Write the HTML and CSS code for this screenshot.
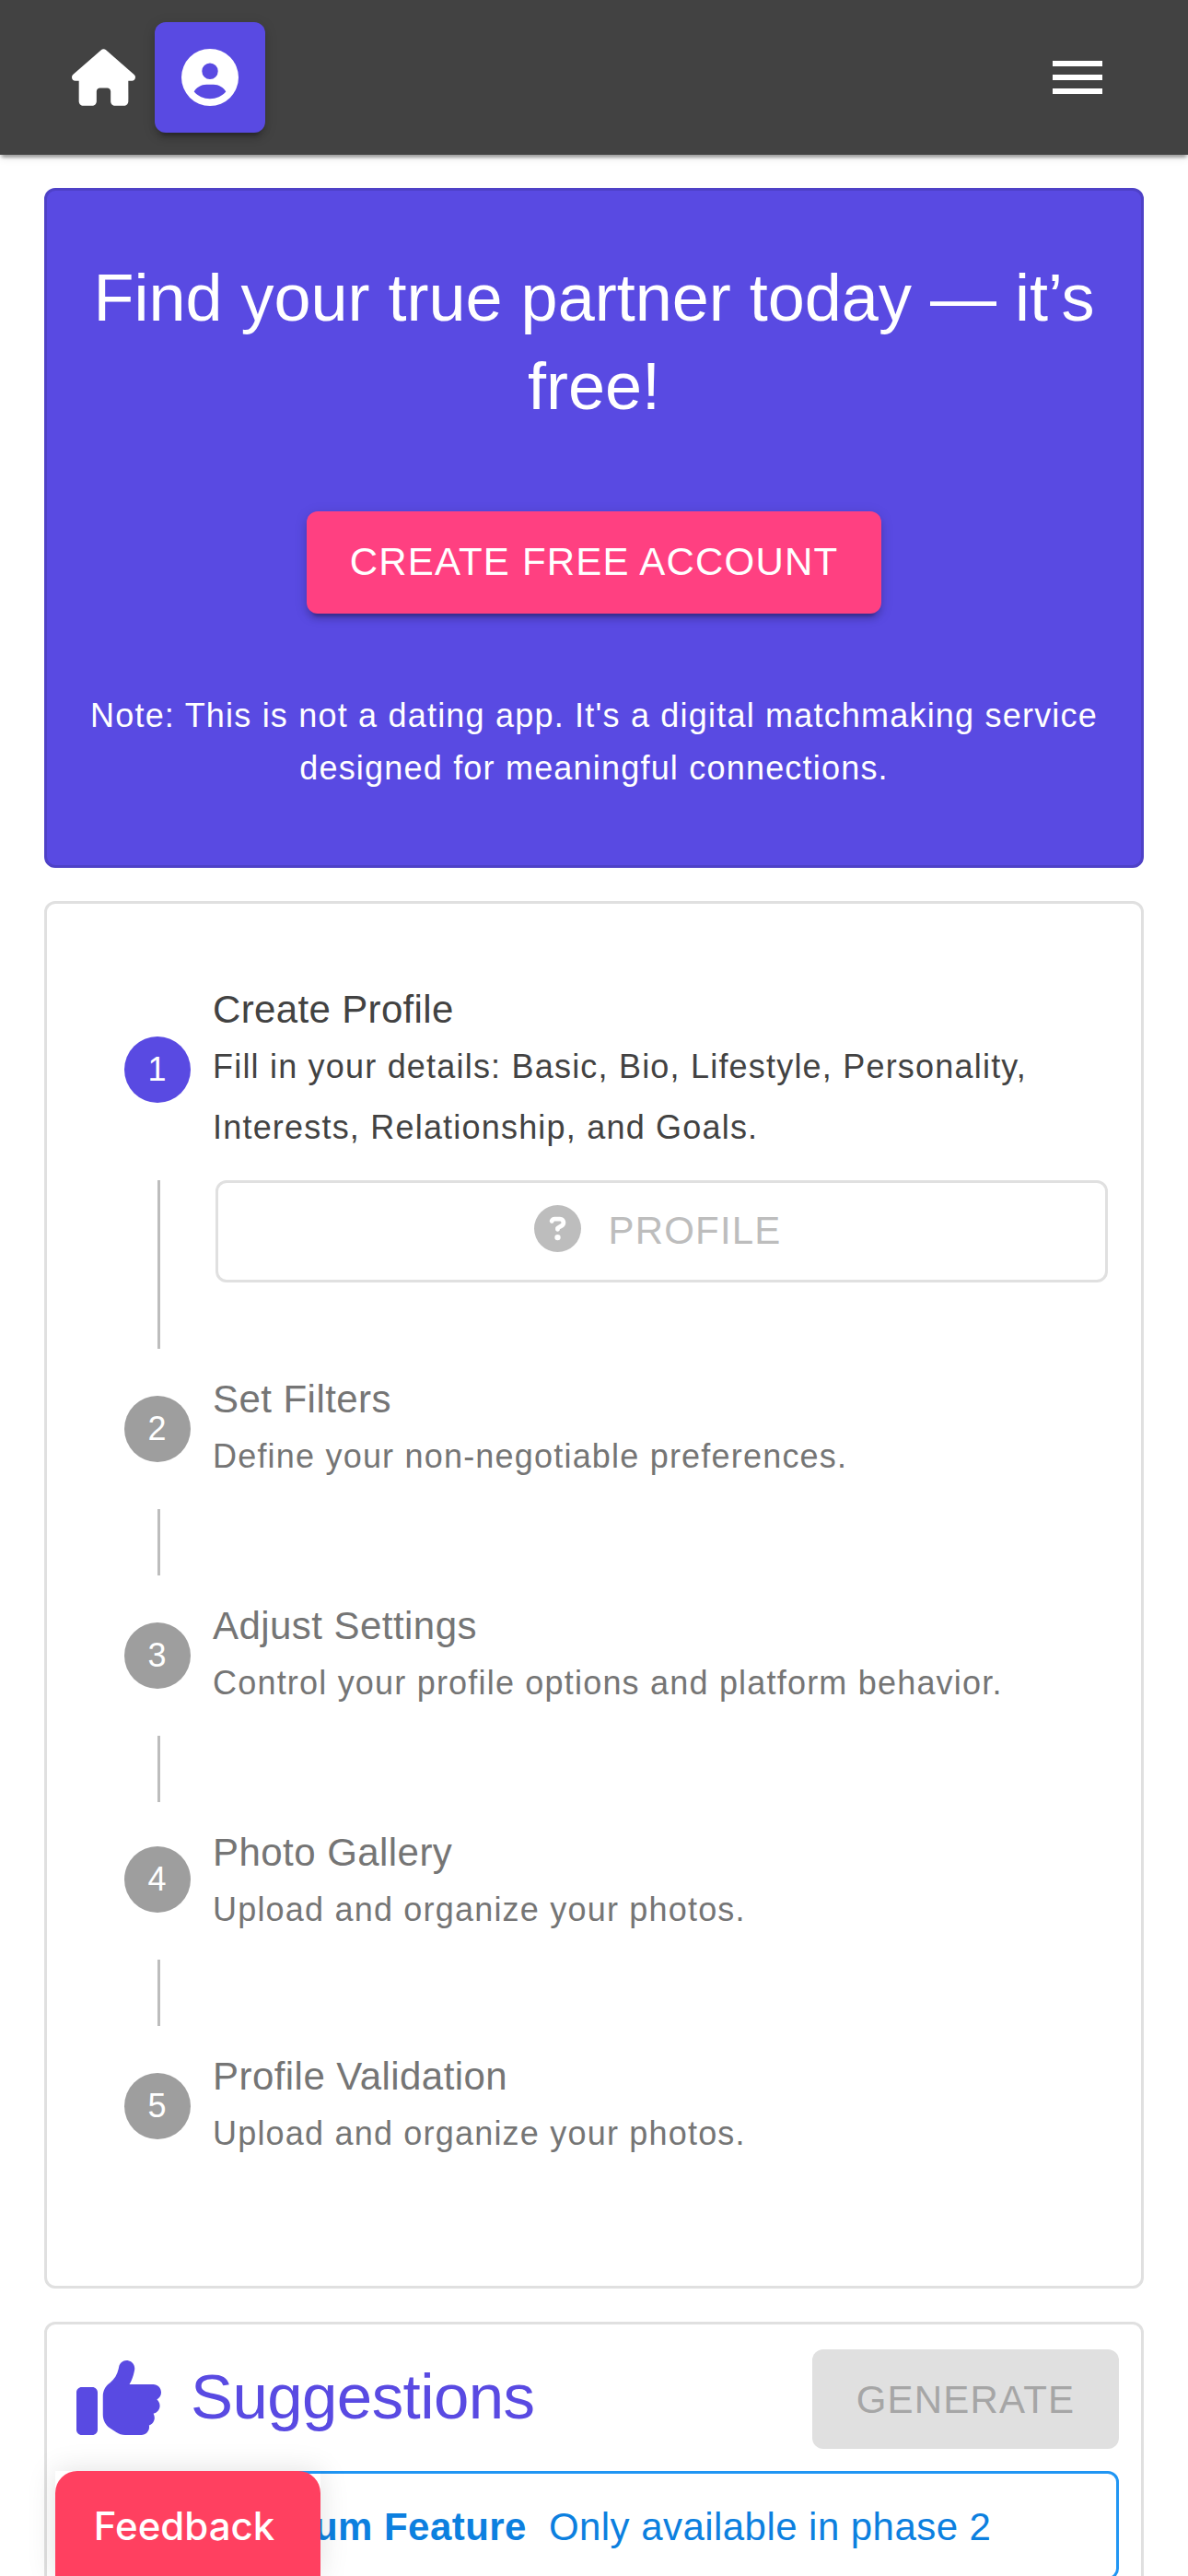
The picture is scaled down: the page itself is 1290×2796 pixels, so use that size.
FILE: index.html
```html
<!DOCTYPE html>
<html lang="en">
<head>
<meta charset="utf-8">
<title>Matchmaking</title>
<link rel="stylesheet" href="styles.css">
</head>
<body>
<header class="appbar">
  <nav class="appbar-nav">
    <a class="home-link" href="#" aria-label="Home">
      <svg class="icon-home" viewBox="0 0 576 512"><path d="M575.8 255.5c0 18-15 32.1-32 32.1h-32l.7 160.2c0 2.7-.2 5.4-.5 8.1V472c0 22.1-17.9 40-40 40H456c-1.1 0-2.2 0-3.3-.1c-1.4 .1-2.8 .1-4.2 .1H416 392c-22.1 0-40-17.9-40-40V448 384c0-17.7-14.3-32-32-32H256c-17.7 0-32 14.3-32 32v64 24c0 22.1-17.9 40-40 40H160 128.1c-1.5 0-3-.1-4.5-.2c-1.2 .1-2.4 .2-3.6 .2H104c-22.1 0-40-17.9-40-40V360c0-.9 0-1.9 .1-2.8V287.6H32c-18 0-32-14-32-32.1c0-9 3-17 10-24L266.4 8c7-7 15-8 22-8s15 2 21 7L564.8 231.5c8 7 12 15 11 24z"/></svg>
    </a>
    <a class="account-link" href="#" aria-label="Account">
      <svg class="icon-user" viewBox="0 0 512 512"><path d="M399 384.2C376.9 345.8 335.4 320 288 320H224c-47.4 0-88.9 25.8-111 64.2c35.2 39.2 86.2 63.8 143 63.8s107.8-24.7 143-63.8zM0 256a256 256 0 1 1 512 0A256 256 0 1 1 0 256zm256 16a72 72 0 1 0 0-144 72 72 0 1 0 0 144z"/></svg>
    </a>
  </nav>
  <button class="menu-button" aria-label="Menu"><span class="menu-bar"></span><span class="menu-bar"></span><span class="menu-bar"></span></button>
</header>

<main class="content">
  <section class="card hero">
    <h1 class="hero-title">Find your true partner today — it’s free!</h1>
    <button class="button button-secondary">CREATE FREE ACCOUNT</button>
    <p class="hero-note">Note: This is not a dating app. It's a digital matchmaking service designed for meaningful connections.</p>
  </section>

  <section class="card steps">
    <div class="step step-active">
      <span class="step-number">1</span>
      <div class="step-text"><div class="step-title">Create Profile</div><div class="step-detail">Fill in your details: Basic, Bio, Lifestyle, Personality, Interests, Relationship, and Goals.</div></div>
    </div>
    <div class="connector connector-open">
      <button class="button button-outlined" disabled>
        <svg class="icon-question" viewBox="0 0 512 512"><path d="M256 512A256 256 0 1 0 256 0a256 256 0 1 0 0 512zM169.8 165.3c7.9-22.3 29.1-37.3 52.8-37.3h58.3c34.9 0 63.1 28.3 63.1 63.1c0 22.6-12.1 43.5-31.7 54.8L280 264.4c-.2 13-10.9 23.6-24 23.6c-13.3 0-24-10.7-24-24V250.5c0-8.6 4.6-16.5 12.1-20.8l44.3-25.4c4.7-2.7 7.6-7.7 7.6-13.1c0-8.4-6.8-15.1-15.1-15.1H222.6c-3.4 0-6.4 2.1-7.5 5.3l-.4 1.2c-4.4 12.5-18.2 19-30.6 14.6s-19-18.2-14.6-30.6l.4-1.2zM224 352a32 32 0 1 1 64 0 32 32 0 1 1 -64 0z"/></svg>
        <span>PROFILE</span>
      </button>
    </div>
    <div class="step">
      <span class="step-number">2</span>
      <div class="step-text"><div class="step-title">Set Filters</div><div class="step-detail">Define your non-negotiable preferences.</div></div>
    </div>
    <div class="connector"></div>
    <div class="step">
      <span class="step-number">3</span>
      <div class="step-text"><div class="step-title">Adjust Settings</div><div class="step-detail">Control your profile options and platform behavior.</div></div>
    </div>
    <div class="connector"></div>
    <div class="step step-compact">
      <span class="step-number">4</span>
      <div class="step-text"><div class="step-title">Photo Gallery</div><div class="step-detail">Upload and organize your photos.</div></div>
    </div>
    <div class="connector"></div>
    <div class="step">
      <span class="step-number">5</span>
      <div class="step-text"><div class="step-title">Profile Validation</div><div class="step-detail">Upload and organize your photos.</div></div>
    </div>
  </section>

  <section class="card suggestions">
    <div class="suggestions-head">
      <svg class="icon-thumb" viewBox="0 32 512 448" preserveAspectRatio="none"><path d="M313.4 32.9c26 5.2 42.9 30.5 37.7 56.5l-2.3 11.4c-5.3 26.7-15.1 52.1-28.8 75.2H464c26.5 0 48 21.5 48 48c0 18.5-10.5 34.6-25.9 42.6C497 275.4 504 288.9 504 304c0 23.4-16.8 42.9-38.9 47.1c4.4 7.3 6.9 15.8 6.9 24.9c0 21.3-13.9 39.4-33.1 45.6c.7 3.3 1.1 6.8 1.1 10.4c0 26.5-21.5 48-48 48H294.5c-19 0-37.5-5.6-53.3-16.1l-38.5-25.7C176 420.4 160 390.4 160 358.3V320 272 247.1c0-29.2 13.3-56.7 36-75l7.4-5.9c26.5-21.2 44.6-51 51.2-84.2l2.3-11.4c5.2-26 30.5-42.9 56.5-37.7zM32 192H96c17.7 0 32 14.3 32 32V448c0 17.7-14.3 32-32 32H32c-17.7 0-32-14.3-32-32V224c0-17.7 14.3-32 32-32z"/></svg>
      <h2 class="suggestions-title">Suggestions</h2>
      <button class="button button-disabled" disabled>GENERATE</button>
    </div>
    <div class="alert"><strong>Premium Feature</strong><span>Only available in phase 2</span></div>
  </section>
</main>

<div class="feedback"><button class="feedback-button">Feedback</button></div>
</body>
</html>
```
FILE: styles.css
```css
* {
  box-sizing: border-box;
}

html,
body {
  height: 2796px;
  overflow: hidden;
}

body {
  margin: 0;
  background: #fff;
  color: #424242;
  font-family: "Liberation Sans", Arial, sans-serif;
}

h1,
h2,
p {
  margin: 0;
  font-weight: 400;
}

button {
  border: 0;
  font-family: inherit;
}

svg {
  display: block;
  flex: none;
  fill: currentColor;
}

/* App bar */
.appbar {
  display: flex;
  align-items: center;
  justify-content: space-between;
  height: 168px;
  padding: 0 93px 0 78px;
  background: #424242;
  color: #fff;
  box-shadow: 0 6px 3px -3px rgba(0, 0, 0, .2), 0 3px 3px rgba(0, 0, 0, .14), 0 3px 9px rgba(0, 0, 0, .12);
}

.appbar-nav {
  display: flex;
  align-items: center;
  gap: 21px;
}

.home-link,
.account-link {
  color: inherit;
}

.icon-home {
  width: 69px;
  height: 62px;
}

.account-link {
  display: flex;
  align-items: center;
  justify-content: center;
  width: 120px;
  height: 120px;
  border-radius: 12px;
  background: #594ae2;
  box-shadow: 0 9px 3px -6px rgba(0, 0, 0, .2), 0 6px 6px rgba(0, 0, 0, .14), 0 3px 15px rgba(0, 0, 0, .12);
}

.icon-user {
  width: 62px;
  height: 62px;
}

.menu-button {
  display: flex;
  flex-direction: column;
  gap: 9px;
  width: 54px;
  padding: 0;
  background: none;
}

.menu-bar {
  height: 6px;
  background: #fff;
}

/* Page */
.content {
  display: flex;
  flex-direction: column;
  gap: 36px;
  padding: 36px 48px 0;
}

.card {
  flex: none;
  border: 3px solid #e0e0e0;
  border-radius: 12px;
}

.button {
  display: flex;
  align-items: center;
  justify-content: center;
  padding: 0 0 1px;
  border-radius: 12px;
  font-size: 42px;
  line-height: 72px;
  letter-spacing: 1.2px;
}

/* Hero */
.hero {
  display: flex;
  flex-direction: column;
  align-items: center;
  height: 738px;
  padding: 68px 36px 0;
  border-color: #4e41c7;
  background: #594ae2;
  color: #fff;
  text-align: center;
}

.hero-title {
  font-size: 72px;
  line-height: 96px;
}

.button-secondary {
  width: 624px;
  height: 111px;
  margin-top: 88px;
  background: #ff4081;
  color: #fff;
  box-shadow: 0 9px 3px -6px rgba(0, 0, 0, .2), 0 6px 6px rgba(0, 0, 0, .14), 0 3px 15px rgba(0, 0, 0, .12);
}

.hero-note {
  margin-top: 82px;
  font-size: 36px;
  line-height: 57px;
  letter-spacing: 1.2px;
}

/* Steps */
.steps {
  height: 1506px;
  padding: 60px 36px 0 84px;
}

.step {
  display: flex;
  align-items: center;
  gap: 24px;
  height: 174px;
  color: #757575;
}

.step-number {
  flex: none;
  width: 72px;
  height: 72px;
  border-radius: 50%;
  background: #9e9e9e;
  color: #fff;
  font-size: 36px;
  line-height: 72px;
  letter-spacing: 1.2px;
  text-align: center;
}

.step-text {
  align-self: flex-start;
  padding-top: 25px;
}

.step-title {
  height: 59px;
  font-size: 42px;
  line-height: 60px;
  letter-spacing: .45px;
}

.step-detail {
  font-size: 36px;
  line-height: 66px;
  letter-spacing: 1.2px;
}

.step-active {
  height: 240px;
  color: #424242;
}

.step-active .step-number {
  background: #594ae2;
}

.step-active .step-title {
  letter-spacing: .35px;
}

.step-compact {
  height: 171px;
}

.step-compact .step-number {
  margin-bottom: 3px;
}

.connector {
  height: 72px;
  margin-left: 36px;
  border-left: 3px solid #bdbdbd;
}

.connector-open {
  height: 183px;
  padding-left: 60px;
}

.button-outlined {
  width: 969px;
  height: 111px;
  gap: 29px;
  padding: 0 8px 1px 0;
  border: 3px solid #e0e0e0;
  background: none;
  color: #bdbdbd;
}

.icon-question {
  width: 51px;
  height: 51px;
  margin-bottom: 5px;
}

/* Suggestions */
.suggestions {
  height: 400px;
  padding: 27px 24px 0;
}

.suggestions-head {
  display: flex;
  align-items: center;
  height: 108px;
  padding-left: 8px;
  color: #594ae2;
}

.icon-thumb {
  width: 92px;
  height: 81px;
  margin-bottom: 3px;
}

.suggestions-title {
  margin: 0 0 4px 32px;
  font-size: 69px;
  line-height: 84px;
  letter-spacing: -.575px;
}

.button-disabled {
  width: 333px;
  height: 108px;
  margin-left: auto;
  padding: 2px 0 0;
  background: #e0e0e0;
  color: #a6a6a6;
}

.alert {
  display: flex;
  align-items: center;
  gap: 24px;
  height: 118px;
  margin-top: 24px;
  padding: 3px 0 0 144px;
  border: 3px solid #2196f3;
  border-radius: 12px;
  color: #0c80df;
  font-size: 42px;
  letter-spacing: .45px;
}

/* Feedback tab pinned to the bottom edge */
.feedback {
  position: fixed;
  bottom: 0;
  left: 60px;
  width: 288px;
  height: 114px;
  box-shadow: 0 0 30px rgba(0, 0, 0, .12);
}

.feedback-button {
  width: 288px;
  height: 114px;
  padding: 6px 8px 0 0;
  border-radius: 24px 24px 0 0;
  background: #ff4060;
  color: #fff;
  font: 500 42px/1 Inter, sans-serif;
}
```
